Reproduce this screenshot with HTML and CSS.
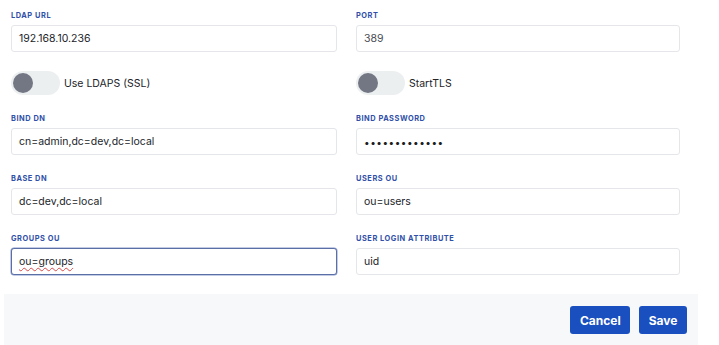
FILE: index.html
```html
<!DOCTYPE html>
<html lang="en">
<head>
<meta charset="utf-8">
<title>LDAP settings</title>
<link rel="stylesheet" href="styles.css">
</head>
<body>
<div class="panel">
  <form class="form">
    <div class="field">
      <label class="label">LDAP URL</label>
      <input class="input" type="text" value="192.168.10.236">
    </div>
    <div class="field">
      <label class="label">Port</label>
      <input class="input input-muted" type="text" value="389">
    </div>
    <div class="toggle-row">
      <span class="toggle"><span class="knob"></span></span>
      <span class="toggle-text">Use LDAPS (SSL)</span>
    </div>
    <div class="toggle-row">
      <span class="toggle"><span class="knob"></span></span>
      <span class="toggle-text">StartTLS</span>
    </div>
    <div class="field">
      <label class="label">Bind DN</label>
      <input class="input" type="text" value="cn=admin,dc=dev,dc=local">
    </div>
    <div class="field">
      <label class="label">Bind Password</label>
      <input class="input input-pass" type="password" value="abcdefghijklm">
    </div>
    <div class="field">
      <label class="label">Base DN</label>
      <input class="input" type="text" value="dc=dev,dc=local">
    </div>
    <div class="field">
      <label class="label">Users OU</label>
      <input class="input" type="text" value="ou=users">
    </div>
    <div class="field">
      <label class="label">Groups OU</label>
      <div class="input input-focus"><span class="misspelled">ou=groups</span></div>
    </div>
    <div class="field">
      <label class="label">User Login Attribute</label>
      <input class="input" type="text" value="uid">
    </div>
  </form>
  <div class="footer">
    <button class="btn" type="button">Cancel</button>
    <button class="btn" type="button">Save</button>
  </div>
</div>
</body>
</html>
```
FILE: styles.css
```css
html, body {
  margin: 0;
  padding: 0;
  background: #ffffff;
}
body {
  font-family: Inter, "Noto Sans", sans-serif;
  color: #222429;
}
.panel {
  width: 694px;
  margin-left: 4px;
}
.form {
  display: grid;
  grid-template-columns: 326px 324px;
  column-gap: 19px;
  row-gap: 19px;
  padding: 11px 18px 19px 7px;
}
.field {
  display: flex;
  flex-direction: column;
}
.label {
  font-size: 7.4px;
  line-height: 10px;
  font-weight: 700;
  letter-spacing: 0.55px;
  text-transform: uppercase;
  color: #2f50a8;
  margin-bottom: 4px;
}
.input {
  box-sizing: border-box;
  height: 27px;
  width: 100%;
  margin: 0;
  border: 1px solid #e4e6ea;
  border-radius: 3px;
  padding: 0 7px;
  font-family: Inter, "Noto Sans", sans-serif;
  font-size: 10.5px;
  color: #222429;
  background: #ffffff;
  outline: none;
  display: flex;
  align-items: center;
}
.input-muted {
  color: #4a4d55;
}
.input-pass {
  font-size: 10px;
  letter-spacing: 0.5px;
  color: #1c1e22;
}
.input-focus {
  border-color: #5a6fa6;
  box-shadow: 0 0 0 0.5px #8a9acb;
}
.misspelled {
  text-decoration: underline wavy #d94a4a;
  text-decoration-thickness: 1px;
  text-underline-offset: 2px;
}
.toggle-row {
  display: flex;
  align-items: center;
  height: 24px;
}
.toggle {
  box-sizing: border-box;
  width: 49px;
  height: 24px;
  border-radius: 12px;
  background: #eceff0;
  display: flex;
  align-items: center;
  padding-left: 2px;
}
.knob {
  width: 20px;
  height: 20px;
  border-radius: 50%;
  background: #737683;
}
.toggle-text {
  margin-left: 4px;
  font-size: 10.5px;
  color: #222429;
}
.footer {
  background: #f7f8fa;
  height: 51px;
  display: flex;
  justify-content: flex-end;
  align-items: flex-start;
  gap: 9px;
  padding: 12px 11px 0 0;
  box-sizing: border-box;
}
.btn {
  height: 28px;
  border: none;
  border-radius: 3px;
  background: #1a4fc0;
  color: #ffffff;
  font-family: Inter, "Noto Sans", sans-serif;
  font-weight: 700;
  font-size: 12px;
  padding: 0 9.5px;
  cursor: pointer;
}
```
